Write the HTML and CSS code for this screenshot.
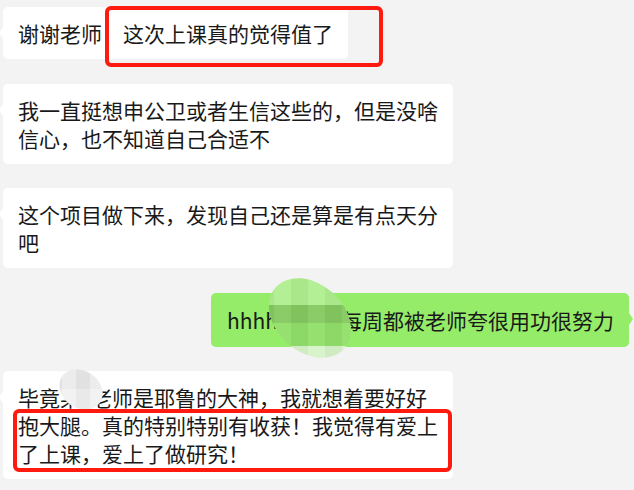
FILE: index.html
```html
<!DOCTYPE html>
<html lang="zh-CN">
<head>
    <meta charset="UTF-8">
    <meta name="viewport" content="width=device-width, initial-scale=1.0">
    <title>聊天记录</title>
    <link rel="stylesheet" href="styles.css">
</head>
<body>
    <div class="chat">
        <!-- first message, the second half is boxed in red -->
        <div class="row">
            <div class="bubble">谢谢老师　这次上课真的觉得值了
                <div class="mark mark-one"></div>
            </div>
        </div>

        <div class="row">
            <div class="bubble">我一直挺想申公卫或者生信这些的，但是没啥信心，也不知道自己合适不</div>
        </div>

        <div class="row">
            <div class="bubble">这个项目做下来，发现自己还是算是有点天分吧</div>
        </div>

        <div class="row me">
            <div class="bubble green">hhhh，我们每周都被老师夸很用功很努力
                <div class="blur blur-green"><div class="fill"></div></div>
            </div>
        </div>

        <div class="row">
            <div class="bubble">毕竟<span class="hidden-name">某</span>老师是耶鲁的大神，我就想着要好好<br>抱大腿。真的特别特别有收获！我觉得有爱上了上课，爱上了做研究！
                <div class="blur blur-grey"><div class="fill"></div></div>
                <div class="mark mark-two"></div>
            </div>
        </div>
    </div>
</body>
</html>
```

FILE: styles.css
```css
body {
    background-color: #f3f3f3;
    color: #191919;
    font-family: "Noto Sans CJK SC", "Microsoft YaHei", sans-serif;
    margin: 0;
    padding: 0;
    overflow: hidden;
}
.chat {
    display: flex;
    flex-direction: column;
    gap: 24.5px;
    padding: 7px 5px 0 3px;
}
.row {
    display: flex;
}
.row.me {
    justify-content: flex-end;
}
.bubble {
    position: relative;
    max-width: 420px;
    padding: 12px 15px;
    background-color: #ffffff;
    border-radius: 5px;
    font-size: 21px;
    line-height: 28px;
}
/* little tail on the left */
.bubble::before {
    content: "";
    position: absolute;
    left: -4px;
    top: 20px;
    border-top: 6px solid transparent;
    border-bottom: 6px solid transparent;
    border-right: 4px solid #ffffff;
}
.bubble.green {
    background-color: #95ec69;
    padding: 13px 15px 13px 16px;
}
.bubble.green::before {
    left: auto;
    right: -4px;
    border-right: none;
    border-left: 4px solid #95ec69;
}
.hidden-name {
    margin-right: 10px;
}

/* red highlight boxes */
.mark {
    position: absolute;
    border: 4px solid #ff1a10;
    border-radius: 6px;
}
.mark-one {
    left: 102px;
    top: -1px;
    width: 270px;
    height: 53px;
}
.mark-two {
    left: 10px;
    top: 38px;
    width: 431px;
    height: 55px;
}

/* privacy smudges: a tilted oval, the fill inside is turned back so its bands stay level */
.blur {
    position: absolute;
    border-radius: 50%;
    overflow: hidden;
}
.blur .fill {
    position: absolute;
    inset: -24px;
}
.blur-green {
    left: 53px;
    top: -9px;
    width: 92px;
    height: 68px;
    transform: rotate(42deg);
}
.blur-green .fill {
    transform: rotate(-42deg);
    background:
        repeating-linear-gradient(to right, rgba(255, 255, 255, 0.05) 0 17px, rgba(0, 0, 0, 0.03) 17px 34px),
        linear-gradient(to bottom, #afee8f 0 45px, #84c960 45px 63px, #91df69 63px 86px, #d7f3c8 86px);
}
.blur-grey {
    left: 55px;
    top: 0;
    width: 46px;
    height: 37px;
    transform: rotate(35deg);
}
.blur-grey .fill {
    transform: rotate(-35deg);
    background:
        repeating-linear-gradient(to right, rgba(255, 255, 255, 0.25) 0 14px, rgba(0, 0, 0, 0.02) 14px 28px),
        linear-gradient(to bottom, #e6e6e6 0 42px, #eeeeee 42px);
}
```
